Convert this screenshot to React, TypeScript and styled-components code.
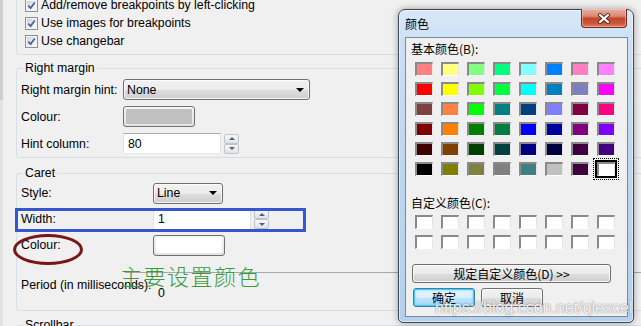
import React from 'react';
import styled, { createGlobalStyle } from 'styled-components';

const GlobalStyle = createGlobalStyle`
  html, body { margin: 0; padding: 0; background: #f0f0f0; }
  body {
    width: 641px; height: 326px; overflow: hidden;
    font-family: "Liberation Sans", Arial, sans-serif;
    font-size: 12px; color: #000;
  }
  * { box-sizing: border-box; }
`;

const Page = styled.div`
  position: relative;
  width: 641px;
  height: 326px;
  overflow: hidden;
  display: flex;
  background: #f0f0f0;
`;

const EdgeStrip = styled.div`
  width: 3px;
  flex: none;
  background: linear-gradient(to bottom, #cfcfcf 0, #cfcfcf 100px, #e3e3e3 100px);
`;

const Settings = styled.div`
  flex: 1;
  display: flex;
  flex-direction: column;
  padding-left: 13px;
  margin-right: -14px;
  font-size: 12.3px;
`;

const Group = styled.fieldset<{ $mt: number; $pt?: number; $pb?: number }>`
  margin: ${p => p.$mt}px 0 0 0;
  padding: ${p => p.$pt ?? 0}px 0 ${p => p.$pb ?? 0}px 4px;
  border: 1px solid #d5dfe5;
  border-radius: 3px;
  min-width: 0;
  flex: none;
`;

const Legend = styled.legend`
  margin-left: 2px;
  padding: 0 2px;
  line-height: 14px;
  font-size: 12.3px;
`;

const CheckRow = styled.div`
  display: flex;
  align-items: center;
  gap: 3px;
  height: 18px;
  padding-left: 4px;
  white-space: nowrap;
`;

const CheckBox = styled.span`
  width: 13px;
  height: 13px;
  flex: none;
  border: 1px solid #8e8f8f;
  background: linear-gradient(135deg, #c9cdd3 0%, #eef0f2 60%, #fbfbfb 100%);
  box-shadow: inset 0 0 0 1px #f4f4f4;
  display: flex;
  align-items: center;
  justify-content: center;
`;

const FieldRow = styled.div<{ $labelWidth: number; $h: number }>`
  display: grid;
  grid-template-columns: ${p => p.$labelWidth}px auto;
  align-items: center;
  justify-items: start;
  height: ${p => p.$h}px;
`;

const Label = styled.span`
  white-space: nowrap;
`;

const Combo = styled.div<{ $w: number }>`
  width: ${p => p.$w}px;
  height: 21px;
  display: flex;
  align-items: center;
  justify-content: space-between;
  padding: 0 5px 0 3px;
  border: 1px solid #707070;
  border-radius: 3px;
  background: linear-gradient(#f2f2f2 0%, #ebebeb 50%, #dddddd 51%, #cfcfcf 100%);
  box-shadow: inset 0 0 0 1px rgba(255, 255, 255, 0.75);
`;

const ComboArrow = styled.span`
  width: 0;
  height: 0;
  border-left: 4px solid transparent;
  border-right: 4px solid transparent;
  border-top: 4px solid #000;
`;

const ColourButton = styled.div`
  width: 72px;
  height: 21px;
  padding: 2px;
  border: 1px solid #707070;
  border-radius: 3px;
  background: linear-gradient(#f6f6f6, #e2e2e2);
  display: flex;
`;

const ColourFill = styled.div<{ $fill: string }>`
  flex: 1;
  background: ${p => p.$fill};
  border-radius: 1px;
`;

const SpinField = styled.div`
  display: flex;
  align-items: center;
  gap: 3px;
`;

const TextBox = styled.div`
  width: 98px;
  height: 21px;
  display: flex;
  align-items: center;
  padding-left: 4px;
  background: #fff;
  border: 1px solid;
  border-color: #abadb3 #e2e3ea #e3e9ef #e2e3ea;
`;

const Spinner = styled.div`
  display: flex;
  flex-direction: column;
  height: 20px;
`;

const SpinBtn = styled.div<{ $up?: boolean }>`
  width: 15px;
  height: 10px;
  border: 1px solid #c0c4ca;
  border-radius: 2px;
  background: linear-gradient(#f7f7f7, #e3e3e3);
  display: flex;
  align-items: center;
  justify-content: center;
  &::after {
    content: '';
    width: 0;
    height: 0;
    border-left: 3px solid transparent;
    border-right: 3px solid transparent;
    ${p => (p.$up ? 'border-bottom: 3px solid #4d6185;' : 'border-top: 3px solid #4d6185;')}
  }
`;

const PeriodBlock = styled.div`
  display: flex;
  flex-direction: column;
  padding-bottom: 9px;
`;

const Track = styled.div`
  height: 1px;
  margin: 14px 0 0 104px;
  background: #a8a8a8;
`;

const PeriodRow = styled.div`
  display: grid;
  grid-template-columns: 137px auto;
  align-items: start;
  line-height: 15px;
`;

const PeriodLabel = styled.span`
  margin-top: 5px;
  white-space: nowrap;
`;

const PeriodValue = styled.span`
  margin-top: 13px;
`;

/* annotations drawn over the screenshot */
const BlueBox = styled.div`
  position: absolute;
  left: 15px;
  top: 208px;
  width: 291px;
  height: 24px;
  border: 3px solid #3656d0;
`;

const RedEllipse = styled.div`
  position: absolute;
  left: 13px;
  top: 234px;
  width: 70px;
  height: 31px;
  border: 3px solid #7a1518;
  border-radius: 50%;
`;

const GreenNote = styled.div`
  position: absolute;
  left: 120px;
  top: 264px;
  font-family: "Noto Sans CJK SC", sans-serif;
  font-size: 22px;
  line-height: 22px;
  letter-spacing: 1.5px;
  color: #3a9a3e;
  font-weight: 300;
`;

/* Windows colour dialog */
const Dialog = styled.div`
  position: absolute;
  left: 398px;
  top: 9px;
  width: 236px;
  height: 314px;
  display: flex;
  flex-direction: column;
  padding: 0 5px 5px 6px;
  border: 1px solid #3e4650;
  border-radius: 7px 7px 5px 5px;
  background: linear-gradient(180deg, #d8e8f8 0%, #cadff4 12%, #bfd7f0 45%, #b4d0ee 100%);
  box-shadow: 0 0 7px rgba(0, 0, 0, 0.35), inset 0 0 0 1px rgba(255, 255, 255, 0.55);
  font-family: "Noto Sans CJK SC", "Liberation Sans", sans-serif;
  font-size: 12px;
`;

const TitleBar = styled.div`
  height: 27px;
  flex: none;
  display: flex;
  align-items: center;
  justify-content: space-between;
`;

const Title = styled.span`
  padding-top: 1px;
  line-height: 16px;
`;

const CloseButton = styled.div`
  align-self: flex-start;
  margin: -1px 1px 0 0;
  width: 46px;
  height: 19px;
  border: 1px solid #6b2b20;
  border-top: none;
  border-radius: 0 0 4px 4px;
  background: linear-gradient(#eab0a2 0%, #dc8670 40%, #c4452c 52%, #cc5638 80%, #dc8264 100%);
  box-shadow: inset 0 0 0 1px rgba(255, 220, 210, 0.45);
  display: flex;
  align-items: center;
  justify-content: center;
`;

const Client = styled.div`
  flex: 1;
  display: flex;
  flex-direction: column;
  align-items: flex-start;
  padding-left: 5px;
  border: 1px solid #7d8995;
  background: #f0f0f0;
`;

const SectionLabel = styled.div<{ $mt: number }>`
  margin-top: ${p => p.$mt}px;
  line-height: 16px;
  white-space: nowrap;
`;

const SwatchGrid = styled.div<{ $mt: number }>`
  margin: ${p => p.$mt}px 0 0 4px;
  display: grid;
  grid-template-columns: repeat(8, 18px);
  grid-auto-rows: 14px;
  column-gap: 8px;
  row-gap: 6px;
`;

const Swatch = styled.div<{ $c: string; $selected?: boolean }>`
  position: relative;
  width: 18px;
  height: 14px;
  background: ${p => p.$c};
  border-style: solid;
  border-width: 2px 1px 1px 2px;
  border-color: #8a8a8a #e4e4e4 #ffffff #8a8a8a;
  ${p =>
    p.$selected
      ? `
    box-shadow: 0 0 0 2px #000;
    &::after {
      content: '';
      position: absolute;
      left: -6px; top: -6px; right: -5px; bottom: -5px;
      border: 1px dotted #000;
    }
  `
      : ''}
`;

const WideButton = styled.div`
  margin: 15px 0 0 1px;
  width: 199px;
  height: 19px;
  display: flex;
  align-items: center;
  justify-content: center;
  border: 1px solid #707070;
  border-radius: 3px;
  background: linear-gradient(#f2f2f2 0%, #ebebeb 50%, #dddddd 51%, #cfcfcf 100%);
  box-shadow: inset 0 0 0 1px rgba(255, 255, 255, 0.75);
  white-space: nowrap;
`;

const ButtonRow = styled.div`
  margin: 5px 0 0 2px;
  display: flex;
  gap: 6px;
`;

const PushButton = styled.div<{ $default?: boolean }>`
  width: 62px;
  height: 19px;
  display: flex;
  align-items: center;
  justify-content: center;
  border: 1px solid ${p => (p.$default ? '#3c7fb1' : '#707070')};
  border-radius: 3px;
  background: ${p =>
    p.$default
      ? 'linear-gradient(#e9f6fd 0%, #d8effc 50%, #bee6fd 51%, #a7d9f5 100%)'
      : 'linear-gradient(#f2f2f2 0%, #ebebeb 50%, #dddddd 51%, #cfcfcf 100%)'};
  box-shadow: ${p =>
    p.$default ? 'inset 0 0 0 1px #48c8f5, inset 0 0 2px 2px rgba(120,215,250,0.5)' : 'inset 0 0 0 1px rgba(255,255,255,0.75)'};
`;

const Watermark = styled.div`
  position: absolute;
  left: 435px;
  top: 299px;
  font-family: "Liberation Sans", Arial, sans-serif;
  font-size: 16px;
  line-height: 18px;
  color: rgba(255, 255, 255, 0.92);
  text-shadow: 0 0 1px rgba(60, 60, 60, 0.55), 0 0 2px rgba(60, 60, 60, 0.3);
  white-space: nowrap;
`;

const swatchColors = [
  ['#FF8080', '#FFFF80', '#80FF80', '#00FF80', '#80FFFF', '#0080FF', '#FF80C0', '#FF80FF'],
  ['#FF0000', '#FFFF00', '#80FF00', '#00FF40', '#00FFFF', '#0080C0', '#8080C0', '#FF00FF'],
  ['#804040', '#FF8040', '#00FF00', '#008080', '#004080', '#8080FF', '#800040', '#FF0080'],
  ['#800000', '#FF8000', '#008000', '#008040', '#0000FF', '#0000A0', '#800080', '#8000FF'],
  ['#400000', '#804000', '#004000', '#004040', '#000080', '#000040', '#400040', '#400080'],
  ['#000000', '#808000', '#808040', '#808080', '#408080', '#C0C0C0', '#400040', '#FFFFFF'],
];

const checks = ['Add/remove breakpoints by left-clicking', 'Use images for breakpoints', 'Use changebar'];

const CheckMark = () => (
  <svg width="9" height="9" viewBox="0 0 9 9">
    <path d="M1.3 4.6 L3.6 7.1 L7.8 1.4" fill="none" stroke="#4a5e9c" strokeWidth="1.7" />
  </svg>
);

const CloseGlyph = () => (
  <svg width="14" height="11" viewBox="0 0 14 11">
    <path d="M3 2 L11 9 M11 2 L3 9" stroke="#4a2a24" strokeWidth="4" strokeLinecap="round" />
    <path d="M3 2 L11 9 M11 2 L3 9" stroke="#ffffff" strokeWidth="2.2" strokeLinecap="round" />
  </svg>
);

const Spin = ({ value }: { value: string }) => (
  <SpinField>
    <TextBox>{value}</TextBox>
    <Spinner>
      <SpinBtn $up />
      <SpinBtn />
    </Spinner>
  </SpinField>
);

export default function App() {
  const flat = swatchColors.flat();
  return (
    <>
      <GlobalStyle />
      <Page>
        <EdgeStrip />
        <Settings>
          <Group $mt={-10} $pt={5} $pb={4}>
            {checks.map(t => (
              <CheckRow key={t}>
                <CheckBox>
                  <CheckMark />
                </CheckBox>
                <Label>{t}</Label>
              </CheckRow>
            ))}
          </Group>

          <Group $mt={6} $pt={1}>
            <Legend>Right margin</Legend>
            <FieldRow $labelWidth={102} $h={27}>
              <Label>Right margin hint:</Label>
              <Combo $w={187}>
                <span>None</span>
                <ComboArrow />
              </Combo>
            </FieldRow>
            <FieldRow $labelWidth={102} $h={27}>
              <Label>Colour:</Label>
              <ColourButton>
                <ColourFill $fill="#c0c0c0" />
              </ColourButton>
            </FieldRow>
            <FieldRow $labelWidth={102} $h={27}>
              <Label>Hint column:</Label>
              <Spin value="80" />
            </FieldRow>
          </Group>

          <Group $mt={8}>
            <Legend>Caret</Legend>
            <FieldRow $labelWidth={132} $h={26}>
              <Label>Style:</Label>
              <Combo $w={70}>
                <span>Line</span>
                <ComboArrow />
              </Combo>
            </FieldRow>
            <FieldRow $labelWidth={132} $h={26}>
              <Label>Width:</Label>
              <Spin value="1" />
            </FieldRow>
            <FieldRow $labelWidth={132} $h={26}>
              <Label>Colour:</Label>
              <ColourButton>
                <ColourFill $fill="#ffffff" />
              </ColourButton>
            </FieldRow>
            <PeriodBlock>
              <Track />
              <PeriodRow>
                <PeriodLabel>Period (in milliseconds):</PeriodLabel>
                <PeriodValue>0</PeriodValue>
              </PeriodRow>
            </PeriodBlock>
          </Group>

          <Group $mt={7} $pb={20}>
            <Legend>Scrollbar</Legend>
          </Group>
        </Settings>

        <BlueBox />
        <RedEllipse />
        <GreenNote>主要设置颜色</GreenNote>

        <Dialog>
          <TitleBar>
            <Title>颜色</Title>
            <CloseButton>
              <CloseGlyph />
            </CloseButton>
          </TitleBar>
          <Client>
            <SectionLabel $mt={3}>基本颜色(B):</SectionLabel>
            <SwatchGrid $mt={5}>
              {flat.map((c, i) => (
                <Swatch key={i} $c={c} $selected={i === flat.length - 1} />
              ))}
            </SwatchGrid>
            <SectionLabel $mt={19}>自定义颜色(C):</SectionLabel>
            <SwatchGrid $mt={4}>
              {Array.from({ length: 16 }).map((_, i) => (
                <Swatch key={i} $c="#ffffff" />
              ))}
            </SwatchGrid>
            <WideButton>规定自定义颜色(D) &gt;&gt;</WideButton>
            <ButtonRow>
              <PushButton $default>确定</PushButton>
              <PushButton>取消</PushButton>
            </ButtonRow>
          </Client>
        </Dialog>
        <Watermark>https://blog.csdn.net/qlexcel</Watermark>
      </Page>
    </>
  );
}
